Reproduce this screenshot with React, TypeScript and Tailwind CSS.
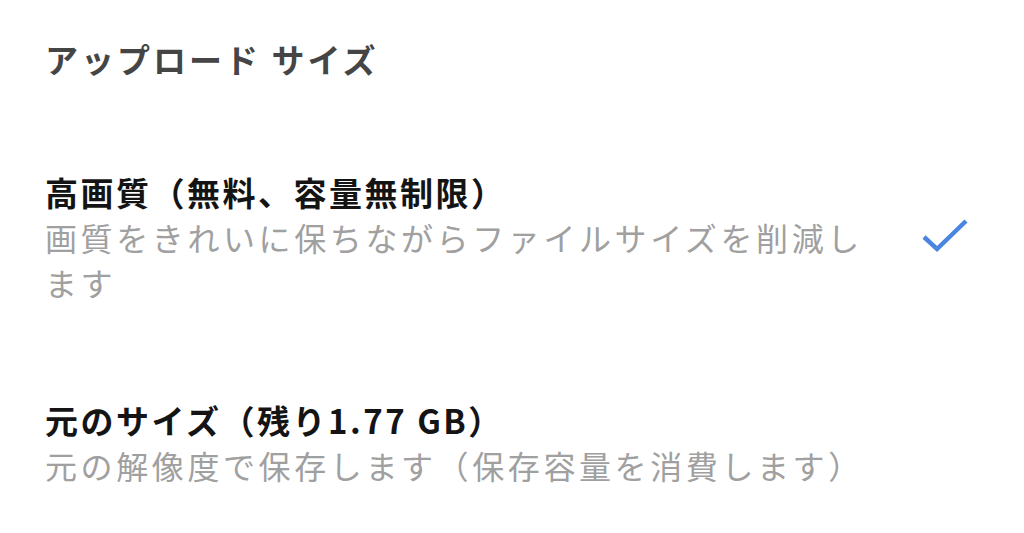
import React from "react";

export default function App() {
  return (
    <div
      className="w-[1024px] h-[533px] bg-white overflow-hidden pl-[45px] pr-[50px]"
      style={{ fontFamily: '"Noto Sans CJK JP", "Noto Sans", sans-serif' }}
    >
      <div className="pt-[37px] text-[33px] leading-[44px] font-bold text-[#454545] tracking-[3px]">
        アップロード サイズ
      </div>
      <div className="mt-[89px] flex items-start">
        <div className="w-[830px]">
          <div className="text-[33px] leading-[45px] font-bold text-[#141414] tracking-[2.5px]">
            高画質（無料、容量無制限）
          </div>
          <div className="text-[32px] leading-[45px] text-[#a0a0a0] tracking-[3.6px]">
            画質をきれいに保ちながらファイルサイズを削減します
          </div>
        </div>
        <div className="ml-auto mt-[47px] mr-[4px]">
          <svg width="50" height="40" viewBox="0 0 50 40">
            <path d="M4 20 L17 32 L46 4" fill="none" stroke="#4a86e0" strokeWidth="4.5" />
          </svg>
        </div>
      </div>
      <div className="mt-[93px]">
        <div className="text-[33px] leading-[45px] font-bold text-[#141414] tracking-[2.5px]">
          元のサイズ（残り1.77 GB）
        </div>
        <div className="text-[32px] leading-[45px] text-[#a0a0a0] tracking-[3.6px]">
          元の解像度で保存します（保存容量を消費します）
        </div>
      </div>
    </div>
  );
}
